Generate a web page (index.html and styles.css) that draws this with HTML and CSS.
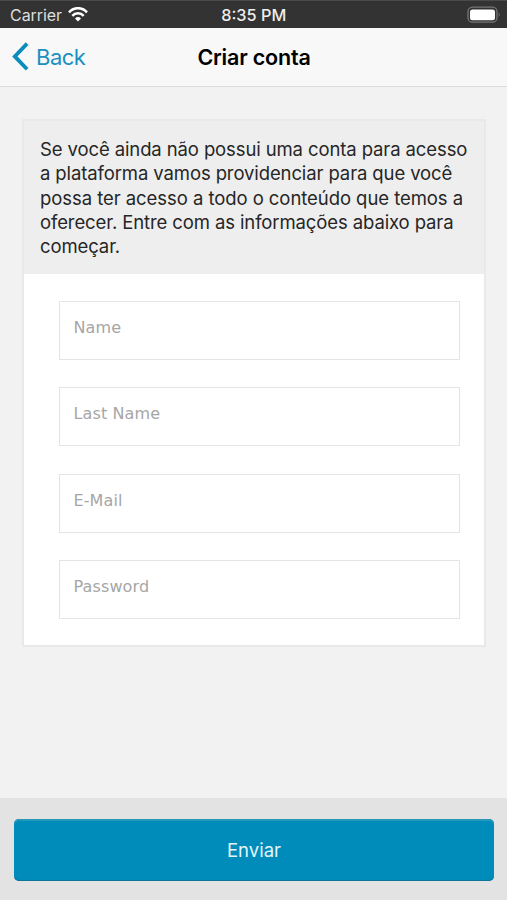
FILE: index.html
```html
<!DOCTYPE html>
<html lang="pt-BR">
<head>
<meta charset="utf-8">
<meta name="viewport" content="width=device-width, initial-scale=1">
<title>Criar conta</title>
<link rel="stylesheet" href="styles.css">
</head>
<body>
<div class="status">
  <div class="status-left">
    <span class="carrier">Carrier</span>
    <svg class="wifi" width="20" height="15" viewBox="0 0 20 15" fill="none" stroke="#fff" stroke-width="2.5">
      <path d="M1 5.3C6-.2 14-.2 19 5.3"/>
      <path d="M4.3 8.9C7.4 5.4 12.6 5.4 15.7 8.9"/>
      <path d="M10 14.4L7 11.4Q10 8.8 13 11.4Z" fill="#fff" stroke="none"/>
    </svg>
  </div>
  <span class="time">8:35 PM</span>
  <svg class="battery" width="34" height="18" viewBox="0 0 34 18">
    <rect x="1" y="1.2" width="29" height="15" rx="4.5" fill="none" stroke="#777" stroke-width="1.3"/>
    <rect x="3" y="3.4" width="25" height="10.8" rx="2.5" fill="#fff"/>
    <path d="M31.7 6.6Q33.6 8.7 31.7 10.8Z" fill="#777"/>
  </svg>
</div>
<header class="navbar">
  <a class="back">
    <svg width="17" height="29" viewBox="0 0 17 29" fill="none" stroke="#0a8dbc" stroke-width="3.8"><path d="M15.1 1.6L2.8 14.4L15.1 27.2"/></svg>
    <span>Back</span>
  </a>
  <h1 class="title">Criar conta</h1>
</header>
<main class="content">
  <form class="card">
    <p class="intro">
      <span>Se você ainda não possui uma conta para acesso</span>
      <span>a plataforma vamos providenciar para que você</span>
      <span class="wide">possa ter acesso a todo o conteúdo que temos a</span>
      <span>oferecer. Entre com as informações abaixo para</span>
      <span>começar.</span>
    </p>
    <div class="fields">
      <input class="field" type="text" placeholder="Name">
      <input class="field" type="text" placeholder="Last Name">
      <input class="field" type="email" placeholder="E-Mail">
      <input class="field" type="password" placeholder="Password">
    </div>
  </form>
</main>
<footer class="footer"><button class="submit" type="button">Enviar</button></footer>
</body>
</html>
```
FILE: styles.css
```css
* { box-sizing: border-box; }
body {
  margin: 0;
  height: 900px;
  display: flex;
  flex-direction: column;
  overflow: hidden;
  background: #f2f2f2;
  font-family: Inter, "Liberation Sans", sans-serif;
}
.status {
  height: 28px;
  display: grid;
  grid-template-columns: 1fr auto 1fr;
  align-items: center;
  padding: 0 6.5px 0 10px;
  background: #333;
  border-top: 1px solid #4a4a4a;
  color: #eee;
  font-size: 16px;
}
.status-left { display: flex; align-items: center; gap: 6px; }
.carrier { color: #ddd; letter-spacing: -0.05px; }
.time { font-weight: 500; font-size: 16.3px; margin-right: 3px; }
.battery { justify-self: end; }
.navbar {
  height: 59px;
  display: grid;
  grid-template-columns: 1fr auto 1fr;
  align-items: center;
  padding: 0 11px 0 12px;
  background: #f8f8f8;
  border-bottom: 1px solid #dcdcdc;
}
.back {
  display: flex;
  align-items: center;
  gap: 7px;
  color: #1a8fc0;
  font-size: 22px;
  letter-spacing: -0.5px;
}
.back svg { margin-bottom: 2px; }
.title {
  margin: 0;
  font-size: 21.5px;
  font-weight: 600;
  letter-spacing: -0.2px;
  color: #000;
}
.content { flex: 1; padding: 32px 22px 0; }
.card {
  width: 464px;
  height: 528px;
  background: #fff;
  border: 2px solid #e9e9e9;
}
.intro {
  margin: 0;
  height: 153px;
  padding: 16px 0 0 16px;
  background: #eee;
  color: #262626;
  font-size: 18.5px;
  line-height: 24.25px;
  letter-spacing: -0.11px;
  white-space: nowrap;
}
.intro span { display: block; }
.intro .wide { letter-spacing: -0.06px; }
.fields {
  display: flex;
  flex-direction: column;
  gap: 27.3px;
  padding: 27px 24px 0 34.5px;
}
.field {
  height: 59px;
  width: 401px;
  margin: 0;
  padding: 0 14px 6px;
  border: 1.5px solid #e4e4e4;
  border-radius: 0;
  background: #fff;
  outline: none;
  color: #333;
  font: 16px "DejaVu Sans", sans-serif;
  letter-spacing: 0.12px;
}
.field::placeholder { color: #a6a6a6; opacity: 1; }
.footer {
  height: 102px;
  padding: 21px 13px 0 14px;
  background: #e3e3e3;
}
.submit {
  display: block;
  width: 100%;
  height: 62px;
  padding: 0;
  border: 0;
  border-radius: 5px;
  background: #008cba;
  box-shadow: inset 0 2px 0 #2597b8, inset 0 -1px 0 #0d7698;
  color: #e4f5fb;
  font: 18.5px Inter, sans-serif;
}
```
